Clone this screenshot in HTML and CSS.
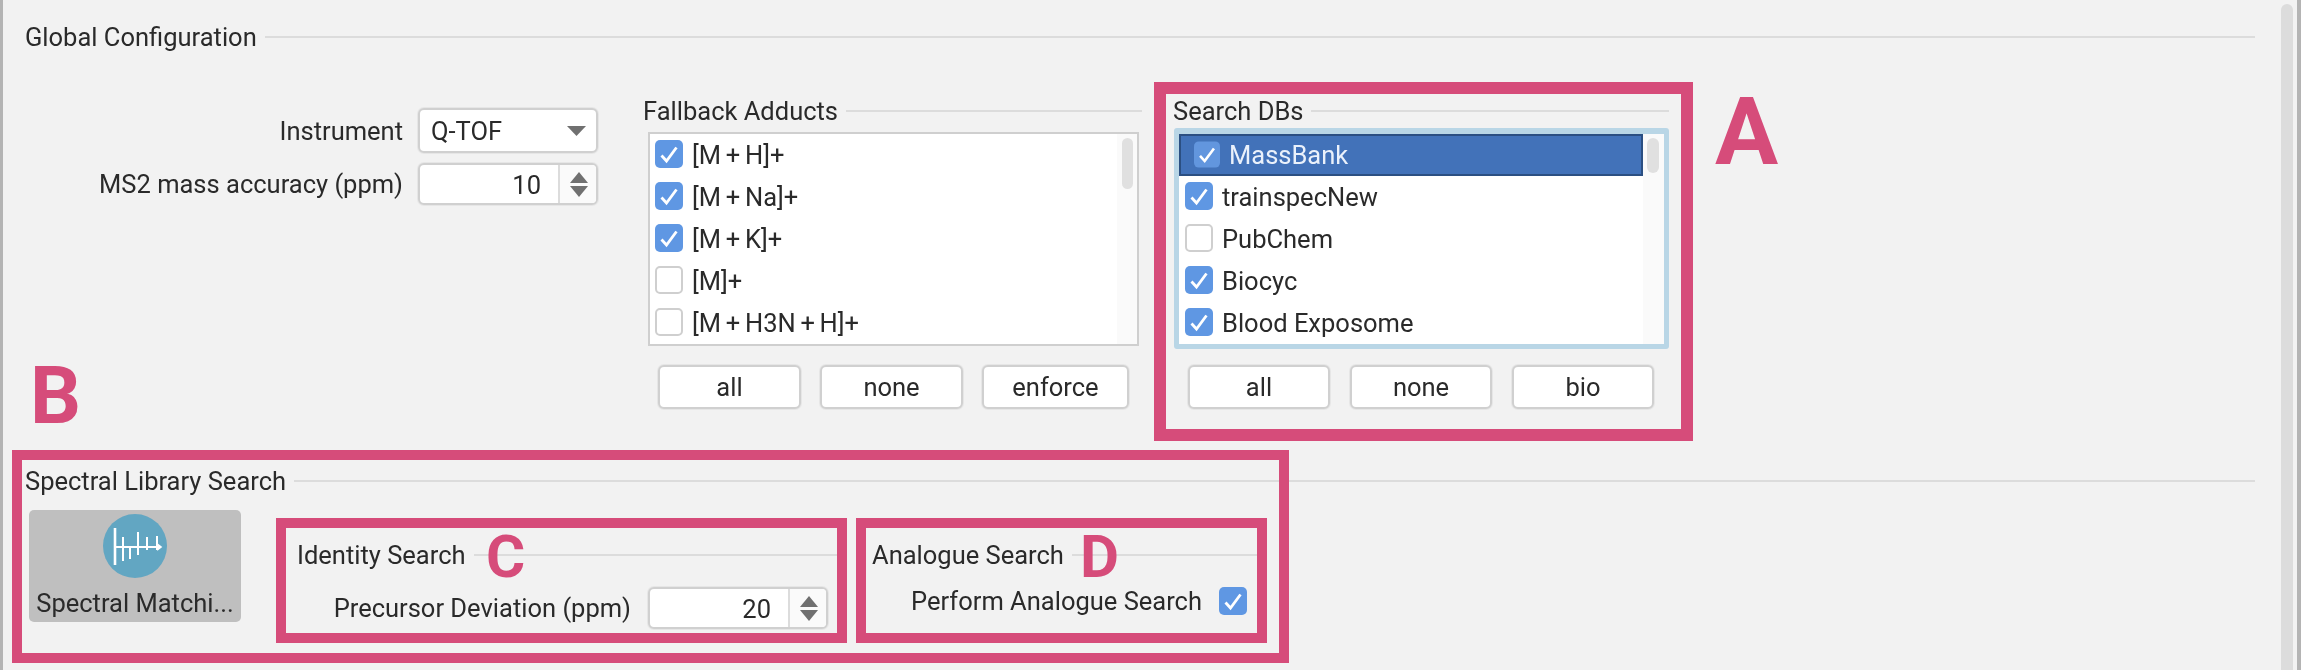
FILE: index.html
```html
<!DOCTYPE html>
<html lang="en">
<head>
<meta charset="utf-8">
<title>Global Configuration</title>
<link rel="stylesheet" href="styles.css">
</head>
<body>
<svg class="defs" width="0" height="0" aria-hidden="true">
  <symbol id="tick" viewBox="0 0 28 28">
    <rect width="28" height="28" rx="5" fill="currentColor"/>
    <polyline points="6.5,15.5 11.5,21 21.5,7.5" fill="none" stroke="#fff" stroke-width="2.8"/>
  </symbol>
  <symbol id="updown" viewBox="0 0 18 25">
    <polygon points="9,0 18,11 0,11" fill="#707070"/>
    <polygon points="0,14 18,14 9,25" fill="#707070"/>
  </symbol>
</svg>
<div class="page">
  <div class="app">
    <main class="content">
      <div class="legend legend--first"><span>Global Configuration</span></div>
      <div class="config-row">
        <div class="form">
          <label class="form-label">Instrument</label>
          <div class="combo"><span>Q-TOF</span>
            <svg class="combo-arrow" width="19" height="10" viewBox="0 0 19 10"><polygon points="0,0 19,0 9.5,10" fill="#707070"/></svg>
          </div>
          <label class="form-label">MS2 mass accuracy (ppm)</label>
          <div class="spin"><span class="spin-value">10</span><span class="spin-btns"><svg class="spin-icon"><use href="#updown"/></svg></span></div>
        </div>

        <section class="group group--adducts">
          <div class="legend"><span>Fallback Adducts</span></div>
          <div class="list list--adducts">
            <div class="rows">
              <div class="row"><svg class="chk"><use href="#tick"/></svg><span>[M + H]+</span></div>
              <div class="row"><svg class="chk"><use href="#tick"/></svg><span>[M + Na]+</span></div>
              <div class="row"><svg class="chk"><use href="#tick"/></svg><span>[M + K]+</span></div>
              <div class="row"><i class="chk chk--off"></i><span>[M]+</span></div>
              <div class="row"><i class="chk chk--off"></i><span>[M + H3N + H]+</span></div>
            </div>
            <div class="vscroll"><div class="thumb"></div></div>
          </div>
          <div class="btns">
            <button class="btn">all</button>
            <button class="btn">none</button>
            <button class="btn btn--wide">enforce</button>
          </div>
        </section>

        <section class="group group--dbs">
          <div class="legend"><span>Search DBs</span></div>
          <div class="list list--focus">
            <div class="rows">
              <div class="row row--selected"><svg class="chk chk--sel"><use href="#tick"/></svg><span>MassBank</span></div>
              <div class="row"><svg class="chk"><use href="#tick"/></svg><span>trainspecNew</span></div>
              <div class="row"><i class="chk chk--off"></i><span>PubChem</span></div>
              <div class="row"><svg class="chk"><use href="#tick"/></svg><span>Biocyc</span></div>
              <div class="row"><svg class="chk"><use href="#tick"/></svg><span>Blood Exposome</span></div>
            </div>
            <div class="vscroll vscroll--dbs"><div class="thumb thumb--dbs"></div></div>
          </div>
          <div class="btns btns--dbs">
            <button class="btn">all</button>
            <button class="btn">none</button>
            <button class="btn">bio</button>
          </div>
        </section>
      </div>

      <div class="legend legend--second"><span>Spectral Library Search</span></div>
      <div class="lib-row">
        <div class="tool">
          <svg class="tool-icon" width="64" height="64" viewBox="0 0 64 64">
            <circle cx="32" cy="32" r="32" fill="#62a6c2"/>
            <g stroke="#fff" fill="none">
              <path stroke-width="2.6" d="M12 14V51"/>
              <path stroke-width="2" d="M20 23V47M27 33V45M35 18V41M44 23V36M54 22V36M12 33H57"/>
              <path stroke-width="1.6" d="M54 30L58 33L54 36"/>
            </g>
          </svg>
          <span class="tool-name">Spectral Matchi...</span>
        </div>
        <section class="sub sub--identity">
          <div class="legend"><span>Identity Search</span></div>
          <div class="sub-line sub-line--identity">
            <label>Precursor Deviation (ppm)</label>
            <div class="spin"><span class="spin-value">20</span><span class="spin-btns"><svg class="spin-icon"><use href="#updown"/></svg></span></div>
          </div>
        </section>
        <section class="sub sub--analogue">
          <div class="legend"><span>Analogue Search</span></div>
          <div class="sub-line sub-line--analogue">
            <label>Perform Analogue Search</label>
            <svg class="chk chk--plain"><use href="#tick"/></svg>
          </div>
        </section>
      </div>
    </main>
    <div class="page-scroll"></div>
  </div>

  <div class="mark mark--a"></div>
  <div class="mark mark--b"></div>
  <div class="mark mark--c"></div>
  <div class="mark mark--d"></div>
  <span class="letter letter--a">A</span>
  <span class="letter letter--b">B</span>
  <span class="letter letter--c">C</span>
  <span class="letter letter--d">D</span>
</div>
</body>
</html>
```
FILE: styles.css
```css
* { box-sizing: border-box; }

html, body {
  margin: 0;
  padding: 0;
  background: #f2f2f2;
}

.defs { position: absolute; }

.page {
  position: relative;
  width: 2301px;
  height: 670px;
  overflow: hidden;
  filter: blur(0.7px);
  font-family: Roboto, "Liberation Sans", sans-serif;
  font-size: 25.5px;
  color: #2a2a2a;
}

.app {
  display: flex;
  height: 670px;
  border-left: 3px solid #b4b4b4;
  border-right: 4px solid #b4b4b4;
}

.content {
  flex: 1;
  min-width: 0;
  padding: 0 26px 0 23px;
}

.page-scroll {
  width: 12px;
  margin: 4px 4px 0 0;
  background: #dcdcdc;
  border-radius: 6px 6px 0 0;
}

/* group titles with a rule running to the right */
.legend {
  display: flex;
  align-items: center;
  gap: 8px;
  height: 30px;
  white-space: nowrap;
}

.legend span { margin-left: -1px; }

.legend::after {
  content: "";
  flex: 1;
  height: 2px;
  background: #dcdcdc;
}

.legend--first { margin-top: 22px; }
.legend--second { margin-top: 57px; }

.config-row {
  display: flex;
  align-items: flex-start;
  margin-top: 44px;
}

/* form on the left */
.form {
  display: grid;
  grid-template-columns: 377px 180px;
  grid-template-rows: 45px 42px;
  column-gap: 15px;
  row-gap: 10px;
  align-items: center;
  margin-top: 12px;
}

.form-label { text-align: right; }

.combo {
  display: flex;
  align-items: center;
  justify-content: space-between;
  height: 45px;
  padding: 0 10px 0 11px;
  background: #fff;
  border: 2px solid #d0d0d0;
  border-radius: 6px;
  box-shadow: 0 0 0 1px #e6e6e6;
}

.spin {
  display: flex;
  width: 180px;
  height: 42px;
  background: #fff;
  border: 2px solid #d0d0d0;
  border-radius: 6px;
  box-shadow: 0 0 0 1px #e6e6e6;
  overflow: hidden;
}

.spin-value {
  flex: 1;
  padding-right: 17px;
  text-align: right;
  line-height: 40px;
}

.spin-btns {
  display: flex;
  align-items: center;
  justify-content: center;
  width: 38px;
  padding-left: 2px;
  background: #fafafa;
  border-left: 2px solid #dcdcdc;
}

.spin-icon { width: 18px; height: 25px; }

/* check lists */
.group--adducts { width: 498px; margin-left: 46px; }
.group--dbs { width: 495px; margin-left: 32px; }

.list {
  display: flex;
  height: 214px;
  margin: 6px 3px 0 4px;
  background: #fff;
  border: 2px solid #cfcfcf;
  overflow: hidden;
}

.list--adducts { word-spacing: -1.6px; }

.list--focus {
  height: 221px;
  margin: 2px 0 0;
  border: 5px solid #b9d6e6;
  border-top-width: 6px;
  border-radius: 3px;
}

.rows {
  flex: 1;
  min-width: 0;
}

.row {
  display: flex;
  align-items: center;
  gap: 9px;
  height: 42px;
  padding: 0 0 0 5px;
  white-space: nowrap;
}

.row .chk { margin-bottom: 2px; }

.list--focus .row { padding-left: 6px; }

.list--focus .row--selected {
  padding: 0 0 0 13px;
  color: #eaf1fb;
  background: #4272b9;
  border: 2px solid #2b4f82;
}

.chk {
  display: block;
  flex: none;
  width: 28px;
  height: 28px;
  color: #5f97e3;
}

.chk--off {
  background: #fff;
  border: 2px solid #cfcfcf;
  border-radius: 5px;
}

.row .chk--sel {
  width: 26px;
  height: 27px;
  color: #6296de;
}

.vscroll {
  flex: none;
  width: 20px;
  padding: 4px 4px 0 5px;
  background: #fafafa;
}

.vscroll--dbs {
  width: 21px;
  padding: 4px 5px 0 4px;
}

.thumb {
  height: 51px;
  background: #e0e0e0;
  border-radius: 6px;
}

.thumb--dbs { height: 35px; }

.btns {
  display: flex;
  gap: 19px;
  margin-top: 19px;
  padding-left: 14px;
}

.btns--dbs {
  gap: 20px;
  margin-top: 16px;
}

.btn {
  width: 143px;
  height: 44px;
  padding: 0;
  font: inherit;
  color: inherit;
  background: #fff;
  border: 2px solid #d0d0d0;
  border-radius: 6px;
  box-shadow: 0 0 0 1px #e6e6e6;
}

.btns--dbs .btn { width: 142px; }
.btn--wide { width: 147px; }

/* lower section */
.lib-row {
  display: flex;
  align-items: flex-start;
  margin-top: 14px;
}

.tool {
  display: flex;
  flex-direction: column;
  align-items: center;
  flex: none;
  width: 212px;
  height: 112px;
  margin-left: 3px;
  padding-top: 4px;
  background: #bfbfbf;
  border-radius: 5px;
}

.tool-name {
  margin-top: 11px;
  line-height: 28px;
  white-space: nowrap;
}

.sub { padding-top: 30px; flex: none; }
.sub--identity { width: 539px; margin-left: 57px; }
.sub--analogue { width: 384px; margin-left: 36px; }

.sub-line {
  display: flex;
  align-items: center;
  justify-content: flex-end;
  gap: 17px;
  margin-top: 17px;
}

.sub-line--identity { padding-right: 9px; }
.sub-line--analogue { margin-top: 16px; padding-right: 10px; }

/* annotations lying over the screenshot */
.mark {
  position: absolute;
  border: 10px solid #d64c7a;
  pointer-events: none;
}

.mark--a { left: 1154px; top: 82px; width: 539px; height: 359px; border-width: 12px; }
.mark--b { left: 12px; top: 450px; width: 1277px; height: 213px; }
.mark--c { left: 276px; top: 518px; width: 571px; height: 125px; }
.mark--d { left: 856px; top: 518px; width: 411px; height: 125px; }

.letter {
  position: absolute;
  font-weight: 700;
  line-height: 1;
  color: #d64c7a;
}

.letter--a { left: 1715px; top: 85px; font-size: 94px; }
.letter--b { left: 30px; top: 356px; font-size: 80px; }
.letter--c { left: 486px; top: 527px; font-size: 60px; }
.letter--d { left: 1080px; top: 527px; font-size: 60px; }
```
